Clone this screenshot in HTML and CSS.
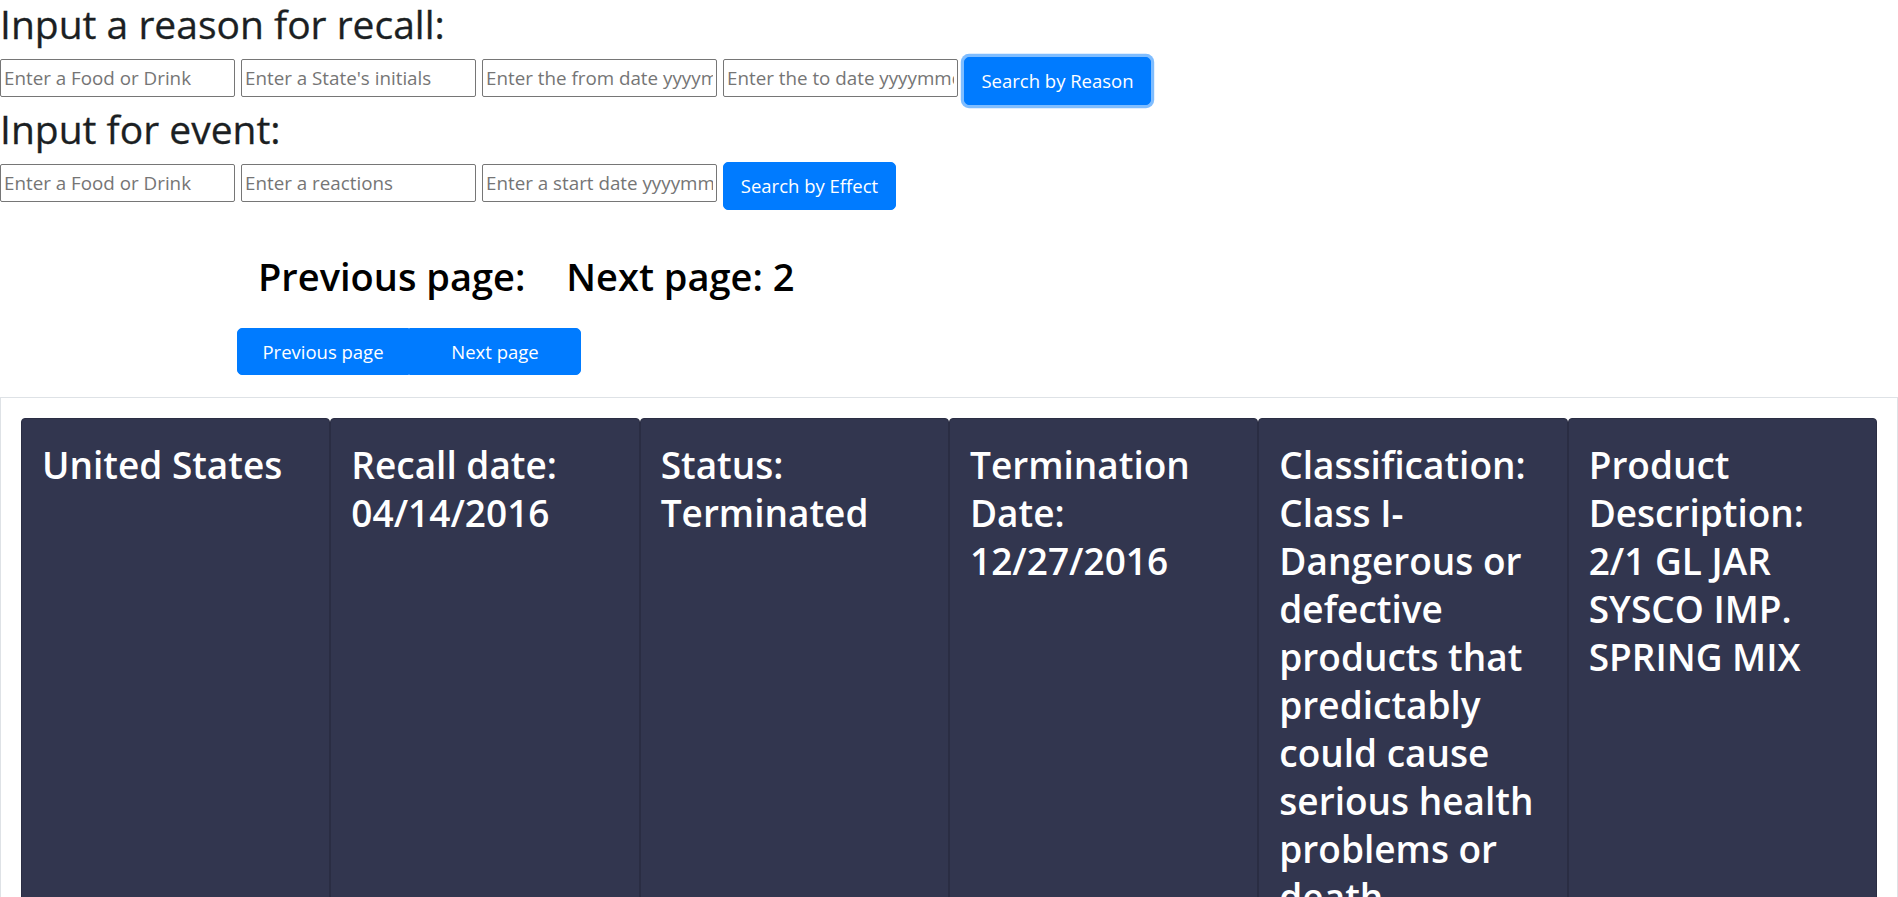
FILE: index.html
```html
<!DOCTYPE html>
<html lang="en">
<head>
<meta charset="utf-8">
<title>Food Recalls</title>
<link rel="stylesheet" href="styles.css">
</head>
<body>
  <h1 class="title">Input a reason for recall:</h1>
  <div class="search-row">
    <input class="field" type="text" placeholder="Enter a Food or Drink">
    <input class="field" type="text" placeholder="Enter a State's initials">
    <input class="field" type="text" placeholder="Enter the from date yyyymmdd">
    <input class="field" type="text" placeholder="Enter the to date yyyymmdd">
    <button class="btn btn-primary btn-lg btn-reason is-focused" type="button">Search by Reason</button>
  </div>

  <h1 class="title">Input for event:</h1>
  <div class="search-row">
    <input class="field" type="text" placeholder="Enter a Food or Drink">
    <input class="field" type="text" placeholder="Enter a reactions">
    <input class="field" type="text" placeholder="Enter a start date yyyymmdd">
    <button class="btn btn-primary btn-lg btn-effect" type="button">Search by Effect</button>
  </div>

  <div class="pager">
    <div class="pager-labels">
      <h1 class="pager-label">Previous page:</h1>
      <h1 class="pager-label">Next page: 2</h1>
    </div>
    <div class="pager-group">
      <button class="btn btn-primary btn-lg pager-btn" type="button">Previous page</button>
      <button class="btn btn-primary btn-lg pager-btn" type="button">Next page</button>
    </div>
  </div>

  <div class="results">
    <div class="card"><h1 class="card-text">United States</h1></div>
    <div class="card"><h1 class="card-text">Recall date: 04/14/2016</h1></div>
    <div class="card"><h1 class="card-text">Status: Terminated</h1></div>
    <div class="card"><h1 class="card-text">Termination Date: 12/27/2016</h1></div>
    <div class="card"><h1 class="card-text">Classification: Class I-Dangerous or defective products that predictably could cause serious health problems or death.</h1></div>
    <div class="card"><h1 class="card-text">Product Description: 2/1 GL JAR SYSCO IMP. SPRING MIX</h1></div>
  </div>
</body>
</html>
```

FILE: styles.css
```css
* {
  box-sizing: border-box;
}

html, body {
  margin: 0;
  padding: 0;
  background: #fff;
}

body {
  font-family: "Open Sans", "Noto Sans", Arial, sans-serif;
  font-size: 16px;
  color: #212529;
}

h1 {
  margin: 0;
}

.title {
  font-size: 39px;
  font-weight: 400;
  line-height: 48px;
  color: #1b1f23;
  margin-bottom: 9px;
  -webkit-text-stroke: 0.3px #1b1f23;
}

.search-row {
  display: flex;
  align-items: flex-start;
  gap: 6px;
}

.field {
  width: 235px;
  height: 38px;
  margin-top: 2px;
  padding: 1px 3px;
  border: 1px solid #767676;
  border-radius: 2px;
  font-family: "Open Sans", "Noto Sans", Arial, sans-serif;
  font-size: 18.8px;
  color: #212529;
  background: #fff;
}

.field::placeholder {
  color: #757575;
  opacity: 1;
}

.btn {
  font-family: "Open Sans", "Noto Sans", Arial, sans-serif;
  border: 1px solid transparent;
  cursor: pointer;
  white-space: nowrap;
}

.btn-primary {
  background: #007bff;
  border-color: #007bff;
  color: #fff;
}

.btn-lg {
  height: 48px;
  padding: 0 16px;
  font-size: 18.5px;
  line-height: 30px;
  border-radius: 5px;
}

.btn-reason {
  width: 187px;
}

.btn-effect {
  width: 173px;
}

.is-focused {
  box-shadow: 0 0 0 3.2px rgba(0, 123, 255, 0.5);
}

.pager {
  margin-top: 42px;
}

.pager-labels {
  display: flex;
  gap: 41px;
  padding-left: 258px;
}

.pager-label {
  font-size: 38px;
  font-weight: 600;
  line-height: 48px;
  color: #000;
}

.pager-group {
  display: flex;
  margin-top: 28px;
  margin-left: 237px;
  width: 344px;
}

.pager-btn {
  flex: 1 1 0;
  height: 47px;
  padding: 0;
  border-radius: 0;
}

.pager-btn:first-child {
  border-radius: 5px 0 0 5px;
}

.pager-btn:last-child {
  border-radius: 0 5px 5px 0;
}

.results {
  margin-top: 22px;
  border: 1px solid #dee2e6;
  padding: 20px;
  display: grid;
  grid-template-columns: repeat(6, 1fr);
}

.card {
  background: #32364f;
  border: 1px solid #2a2d43;
  border-radius: 4px;
  padding: 22px 20px 20px;
  min-height: 560px;
}

.card-text {
  font-size: 37px;
  font-weight: 600;
  line-height: 48px;
  color: #fff;
  word-wrap: break-word;
}
```
